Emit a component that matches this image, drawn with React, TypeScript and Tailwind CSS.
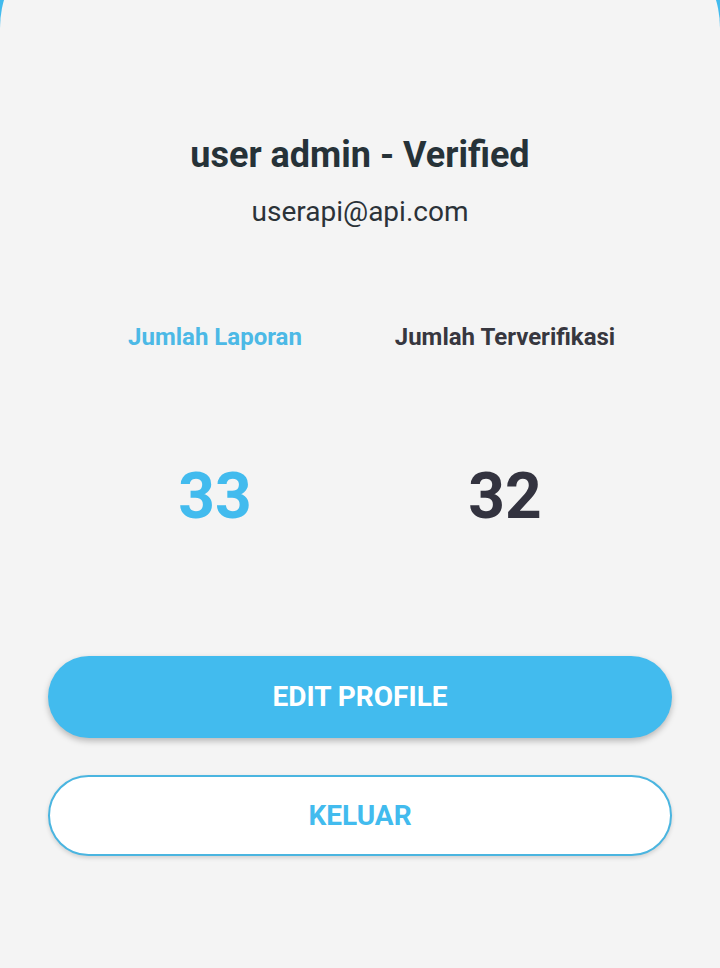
import React from "react";

export default function App() {
  return (
    <div className="h-[968px] w-[720px] overflow-hidden bg-[#42bbee]" style={{ fontFamily: "Roboto, 'Liberation Sans', sans-serif" }}>
      <div className="mt-[-72px] h-[1040px] rounded-t-[100px] bg-[#f4f4f4] pt-[205px] px-[48px]">
        <div className="flex flex-col items-center">
          <h1 className="text-[36px] font-bold leading-[44px] text-[#263238]">user admin - Verified</h1>
          <p className="mt-[18px] text-[28px] leading-[34px] text-[#2b3238]">userapi@api.com</p>
        </div>
        <div className="mt-[93px] mx-[22px] grid grid-cols-2">
          <div className="flex flex-col items-center">
            <span className="text-[24px] font-bold leading-[30px] text-[#4cb9e6]">Jumlah Laporan</span>
            <span className="mt-[107px] text-[64px] font-bold leading-[76px] text-[#42bbee]">33</span>
          </div>
          <div className="flex flex-col items-center">
            <span className="text-[24px] font-bold leading-[30px] text-[#37373f]">Jumlah Terverifikasi</span>
            <span className="mt-[107px] text-[64px] font-bold leading-[76px] text-[#33333f]">32</span>
          </div>
        </div>
        <div className="mt-[121px] flex flex-col gap-[37px]">
          <button className="h-[82px] w-full rounded-full bg-[#42bbee] text-[28px] font-bold text-white shadow-[0_3px_6px_rgba(0,0,0,0.25)]">
            EDIT PROFILE
          </button>
          <button className="h-[81px] w-full rounded-full border-2 border-[#4ab5e0] bg-white text-[28px] font-bold text-[#42bbee] shadow-[0_2px_4px_rgba(0,0,0,0.15)]">
            KELUAR
          </button>
        </div>
      </div>
    </div>
  );
}
